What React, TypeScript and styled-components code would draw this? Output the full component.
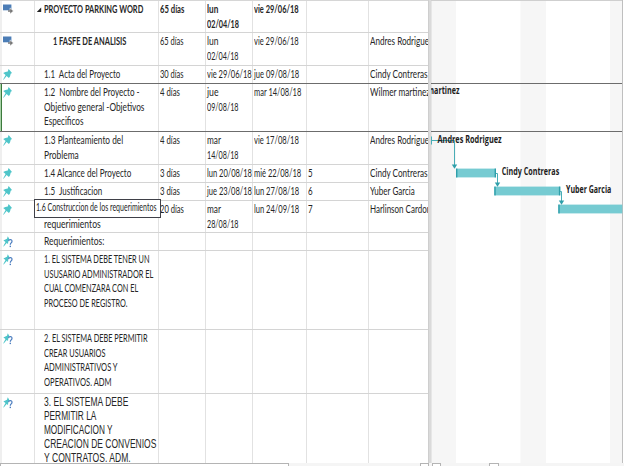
import React, { useLayoutEffect, useRef, useState } from 'react';
import styled, { createGlobalStyle, css } from 'styled-components';

const GlobalStyle = createGlobalStyle`
  body { margin: 0; background: #fff; overflow: hidden; }
  * { box-sizing: border-box; }
`;

const GRID_LINE = '#d4d4d4';
const DARK_LINE = '#6c6c6c';
const TEAL = '#76cbd2';
const TEAL_DARK = '#2f9faa';

const Page = styled.div`
  width: 624px;
  height: 466px;
  display: flex;
  flex-direction: column;
  background: #fff;
  overflow: hidden;
  font-family: Lato, "Open Sans", sans-serif;
  color: #262626;
`;

const Workspace = styled.div`
  display: flex;
  height: 463px;
  flex: none;
`;

const Sheet = styled.div`
  width: 428px;
  flex: none;
  overflow: hidden;
  border-top: 1px solid #d6d6d6;
`;

const Splitter = styled.div`
  width: 4px;
  flex: none;
  background: #dadada;
  border-left: 1px solid #cecece;
  border-right: 1px solid #e6e6e6;
`;

const ChartPane = styled.div`
  width: 192px;
  flex: none;
  margin-left: -1px;
  position: relative;
  svg { display: block; }
`;

const Row = styled.div<{ $h: number; $dark?: boolean; $bold?: boolean }>`
  display: grid;
  grid-template-columns: 35px 124px 47px 47px 54px 62px 59px;
  height: ${(p) => p.$h}px;
  border-bottom: 1px solid ${(p) => (p.$dark ? DARK_LINE : GRID_LINE)};
  font-weight: ${(p) => (p.$bold ? 700 : 400)};
`;

const Cell = styled.div<{ $pad?: number; $last?: boolean; $arial?: boolean }>`
  min-width: 0;
  padding: 1px 0 0 ${(p) => p.$pad ?? 0.8}px;
  border-right: ${(p) => (p.$last ? 'none' : '1px solid #e2e2e2')};
  font-size: 11.4px;
  line-height: 14.7px;
  white-space: pre;
  ${(p) =>
    p.$arial &&
    css`
      font-family: "Liberation Sans", Arial, sans-serif;
      font-size: 12.3px;
      line-height: 14px;
      padding-top: 1px;
    `}
`;

const MarkCell = styled.div<{ $selected?: boolean }>`
  padding: 3px 0 0 1px;
  border-left: 2px solid #efefef;
  border-right: 1px solid #e2e2e2;
  ${(p) =>
    p.$selected &&
    css`
      border-left: 1px solid #a9d3a9;
      box-shadow: inset 1px 0 0 #3c7a3c;
      padding-left: 2px;
    `}
  svg { display: block; }
`;

const LineBox = styled.div<{ $indent?: number }>`
  padding-left: ${(p) => p.$indent ?? 0}px;
`;

const Stretch = styled.span`
  display: inline-block;
  transform-origin: 0 50%;
  white-space: pre;
`;

const NameStack = styled.div`
  position: relative;
`;

const EditBox = styled.div`
  position: absolute;
  left: -10px;
  top: -3px;
  width: 127px;
  height: 19px;
  padding-left: 0.5px;
  background: #fff;
  border: 1px solid #3f4048;
  font-size: 10.6px;
  line-height: 15.5px;
  z-index: 2;
`;

const ScrollTrack = styled.div`
  display: flex;
  height: 3px;
  background: #f5f5f5;
`;

const Thumb = styled.div<{ $w: number; $gap?: number; $solid?: boolean }>`
  width: ${(p) => p.$w}px;
  margin-left: ${(p) => p.$gap ?? 0}px;
  background: #fff;
  border: 1px solid #b4b4b4;
  border-bottom: none;
`;

/** Text condensed or widened to a given width. */
function Fit({ text, w }: { text: string; w: number }) {
  const ref = useRef<HTMLSpanElement>(null);
  const [scale, setScale] = useState(1);
  useLayoutEffect(() => {
    if (ref.current) setScale(w / ref.current.offsetWidth);
  }, [text, w]);
  return (
    <Stretch ref={ref} style={{ transform: `scaleX(${scale})` }}>
      {text}
    </Stretch>
  );
}

type Line = [string, number];

function Lines({ lines, indent }: { lines?: Line[]; indent?: number }) {
  return (
    <>
      {(lines ?? []).map(([text, w], i) => (
        <LineBox key={i} $indent={indent}>
          <Fit text={text} w={w} />
        </LineBox>
      ))}
    </>
  );
}

function Mark({ kind }: { kind: 'auto' | 'pin' | 'ask' }) {
  if (kind === 'auto') {
    return (
      <svg width="12" height="11" viewBox="0 0 12 11">
        <rect x="0" y="0.5" width="8.4" height="5.8" fill="#4c7db6" />
        <path d="M7 3.9L10.4 7L7 10.1Z" fill="#777" stroke="#fff" strokeWidth="0.5" />
        <path d="M5 7H8" stroke="#777" strokeWidth="1.5" />
      </svg>
    );
  }
  return (
    <svg width="12" height="13" viewBox="0 0 12 13">
      <path
        d={
          kind === 'pin'
            ? 'M5.6 0L9 4L7.7 4.8L7 7.6L5.9 9L3.6 6.9L.6 10.8L.2 10.5L2.6 5.9L.2 4L2.4 3.1L4.8 2.6Z'
            : 'M4.8 0.2L6.6 3.4L5.4 4.6L5 8L3.7 7L.7 10.6L.3 10.3L2.5 6L.4 4.4L2.4 3.5L4 2.8Z'
        }
        fill="#4ec5c9"
      />
      {kind === 'ask' && (
        <>
          <path d="M5.5 5.2C5.9 3 9.2 3.2 9 5.4C8.9 6.9 7.3 7 7.3 8.7" fill="none" stroke="#4e7fc0" strokeWidth="1.2" />
          <rect x="6.6" y="9.7" width="1.4" height="1.4" fill="#4e7fc0" />
        </>
      )}
    </svg>
  );
}

interface Task {
  h: number;
  mark: 'auto' | 'pin' | 'ask';
  name: Line[];
  dur?: Line;
  start?: Line[];
  end?: Line;
  pred?: string;
  who?: Line;
  bold?: boolean;
  dark?: boolean;
  selected?: boolean;
  indent?: number;
  outline?: boolean;
  arial?: boolean;
  edit?: Line;
}

const tasks: Task[] = [
  { h: 32, mark: 'auto', bold: true, outline: true, name: [['PROYECTO PARKING WORD', 99]], dur: ['65 días', 24.3], start: [['lun', 11.5], ['02/04/18', 31.8]], end: ['vie 29/06/18', 44.6] },
  { h: 33, mark: 'auto', indent: 9.3, name: [['1 FASFE DE ANALISIS', 73]], dur: ['65 días', 23.7], start: [['lun', 11.2], ['02/04/18', 31.5]], end: ['vie 29/06/18', 44.4], who: ['Andres Rodrigue', 59] },
  { h: 18, mark: 'pin', dark: true, name: [['1.1  Acta del Proyecto', 76.6]], dur: ['30 días', 23.7], start: [['vie 29/06/18', 44.4]], end: ['jue 09/08/18', 45.2], who: ['Cindy Contreras', 57.3] },
  { h: 48, mark: 'pin', dark: true, selected: true, name: [['1.2  Nombre del Proyecto -', 95.5], ['Objetivo general -Objetivos', 100.3], ['Especificos', 39.3]], dur: ['4 días', 19.8], start: [['jue', 11.5], ['09/08/18', 31.5]], end: ['mar 14/08/18', 47.4], who: ['Wilmer martinez', 60] },
  { h: 33, mark: 'pin', name: [['1.3 Planteamiento del', 79.2], ['Problema', 34.6]], dur: ['4 días', 19.8], start: [['mar', 13.8], ['14/08/18', 31.5]], end: ['vie 17/08/18', 44.6], who: ['Andres Rodrigue', 59] },
  { h: 18, mark: 'pin', name: [['1.4 Alcance del Proyecto', 87.2]], dur: ['3 días', 19.8], start: [['lun 20/08/18', 44.8]], end: ['mié 22/08/18', 47.2], pred: '5', who: ['Cindy Contreras', 57.3] },
  { h: 18, mark: 'pin', name: [['1.5  Justificacion', 58.2]], dur: ['3 días', 19.8], start: [['jue 23/08/18', 45]], end: ['lun 27/08/18', 45], pred: '6', who: ['Yuber Garcia', 44.5] },
  { h: 32, mark: 'pin', name: [[' ', 3], ['requerimientos', 56.4]], edit: ['1.6 Construccion de los requerimientos', 120.5], dur: ['20 días', 24], start: [['mar', 13.8], ['28/08/18', 31.5]], end: ['lun 24/09/18', 45], pred: '7', who: ['Harlinson Cardon', 61] },
  { h: 18, mark: 'ask', name: [['Requerimientos:', 60.3]] },
  { h: 79, mark: 'ask', name: [['1. EL SISTEMA DEBE TENER UN', 105.3], ['USUSARIO ADMINISTRADOR EL', 109.6], ['CUAL COMENZARA CON EL', 94.2], ['PROCESO DE REGISTRO.', 83.4]] },
  { h: 64, mark: 'ask', name: [['2. EL SISTEMA DEBE PERMITIR', 103.3], ['CREAR USUARIOS', 61.4], ['ADMINISTRATIVOS Y', 73.4], ['OPERATIVOS. ADM', 67.3]] },
  { h: 72, mark: 'ask', arial: true, name: [['3. EL SISTEMA DEBE', 84.4], ['PERMITIR LA', 52.2], ['MODIFICACION Y', 68.4], ['CREACION DE CONVENIOS', 112.6], ['Y CONTRATOS. ADM.', 86.4]] },
];

const OutlineName = styled.div`
  display: flex;
  margin-left: -7px;
  svg { width: 7px; height: 14px; flex: none; }
`;

function TaskRow({ t }: { t: Task }) {
  return (
    <Row $h={t.h} $dark={t.dark} $bold={t.bold}>
      <MarkCell $selected={t.selected}>
        <Mark kind={t.mark} />
      </MarkCell>
      <Cell $pad={9} $arial={t.arial} >
        {t.outline ? (
          <OutlineName>
            <svg viewBox="0 0 7 14"><path d="M4.2 5.6V10H-0.2Z" fill="#222" /></svg>
            <Lines lines={t.name} />
          </OutlineName>
        ) : (
          <NameStack>
            {t.edit && <EditBox><Fit text={t.edit[0]} w={t.edit[1]} /></EditBox>}
            {t.indent ? <b><Lines lines={t.name} indent={t.indent} /></b> : <Lines lines={t.name} />}
          </NameStack>
        )}
      </Cell>
      <Cell><Lines lines={t.dur && [t.dur]} /></Cell>
      <Cell><Lines lines={t.start} /></Cell>
      <Cell><Lines lines={t.end && [t.end]} /></Cell>
      <Cell><Lines lines={t.pred ? [[t.pred, 4.9]] : []} /></Cell>
      <Cell $last><Lines lines={t.who && [t.who]} /></Cell>
    </Row>
  );
}

const Label = styled.text`
  font: 700 11px "Open Sans", "Noto Sans", sans-serif;
  fill: #1c1c1c;
`;

const bars = [
  { x: 456, y: 168.6, w: 40 },
  { x: 494.3, y: 186.6, w: 66 },
  { x: 558.3, y: 204.6, w: 64 },
];

const labels = [
  { text: 'martinez', x: 427, y: 94.4, w: 32.5 },
  { text: 'Andres Rodriguez', x: 437.5, y: 142.6, w: 64.2 },
  { text: 'Cindy Contreras', x: 501.8, y: 175.2, w: 57.4 },
  { text: 'Yuber Garcia', x: 566, y: 193.2, w: 45.3 },
];

function Gantt() {
  return (
    <svg width="193" height="463" viewBox="431 0 193 463">
      <rect x="432" y="0" width="24" height="463" fill="#f6f6f6" />
      <rect x="520.5" y="0" width="25.5" height="463" fill="#f6f6f6" />
      <rect x="610" y="0" width="12" height="463" fill="#f6f6f6" />
      <rect x="431" y="0" width="192" height="1" fill="#cfcfcf" />
      <rect x="431" y="83" width="191" height="1" fill={DARK_LINE} />
      <rect x="431" y="131" width="191" height="1" fill={DARK_LINE} />
      <rect x="622" y="0" width="1" height="463" fill="#bfbfbf" />
      {bars.map((b, i) => (
        <g key={i}>
          <rect x={b.x} y={b.y} width={b.w} height="8.8" fill={TEAL} />
          <rect x={b.x} y={b.y} width="1.4" height="8.8" fill={TEAL_DARK} />
          {i < 2 && <rect x={b.x + b.w - 1.4} y={b.y} width="1.4" height="8.8" fill={TEAL_DARK} />}
        </g>
      ))}
      <g fill="none" stroke="#49adb6" strokeWidth="1">
        <path d="M431.5 136.5V144.5M431 140.5H454.5V166" />
        <path d="M496 173.5H497.5V183" />
        <path d="M560 191.5H561.5V201" />
      </g>
      <g fill={TEAL_DARK}>
        <path d="M451.8 164.6H457.2L454.5 168.8Z" />
        <path d="M494.8 182.6H500.2L497.5 186.8Z" />
        <path d="M558.8 200.6H564.2L561.5 204.8Z" />
      </g>
      {labels.map((l) => (
        <Label key={l.text} x={l.x} y={l.y} textLength={l.w} lengthAdjust="spacingAndGlyphs">
          {l.text}
        </Label>
      ))}
    </svg>
  );
}

export default function App() {
  return (
    <Page>
      <GlobalStyle />
      <Workspace>
        <Sheet>
          {tasks.map((t, i) => <TaskRow key={i} t={t} />)}
        </Sheet>
        <Splitter />
        <ChartPane><Gantt /></ChartPane>
      </Workspace>
      <ScrollTrack>
        <Thumb $w={289} />
        <Thumb $w={9} $gap={131} />
        <Thumb $w={9} $gap={3} />
        <Thumb $w={10} $gap={48} />
      </ScrollTrack>
    </Page>
  );
}
